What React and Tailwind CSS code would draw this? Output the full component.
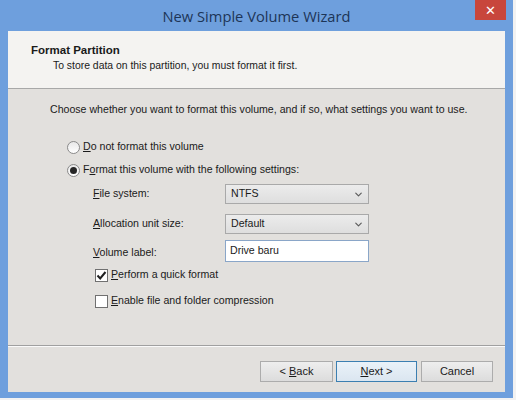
import { ChevronDown } from "lucide-react";

function Key({ children }) {
  return <span className="underline underline-offset-[1px]">{children}</span>;
}

function Radio({ checked, children }) {
  return (
    <div className="flex items-center h-[16px]">
      <div className="w-[13px] h-[13px] rounded-full border border-[#8a8a8a] bg-gradient-to-b from-[#e8e8e8] to-[#ffffff] flex items-center justify-center">
        {checked && <div className="w-[7px] h-[7px] rounded-full bg-[#262626]" />}
      </div>
      <span className="ml-[3px]">{children}</span>
    </div>
  );
}

function Checkbox({ checked, children }) {
  return (
    <div className="flex items-center h-[14px]">
      <div className="w-[13px] h-[13px] border border-[#707070] bg-white flex items-center justify-center">
        {checked && (
          <svg width="11" height="11" viewBox="0 0 11 11">
            <path d="M1.5 5.5 L4.2 8.5 L9.5 2" fill="none" stroke="#202020" strokeWidth="2" />
          </svg>
        )}
      </div>
      <span className="ml-[3px]">{children}</span>
    </div>
  );
}

function Select({ value }) {
  return (
    <div className="w-[144px] h-[20px] border border-[#a9a9a9] bg-gradient-to-b from-[#ececec] to-[#dedede] flex items-center justify-between pl-[5px] pr-[4px]">
      <span>{value}</span>
      <ChevronDown size={11} strokeWidth={2.5} className="text-[#5a5a5a]" />
    </div>
  );
}

function Button({ children, primary, className = "" }) {
  return (
    <div
      className={
        "h-[21px] flex items-center justify-center border bg-gradient-to-b text-[11px] " +
        (primary
          ? "border-[#3c7fb1] from-[#eaf2f9] to-[#dbe6f0] "
          : "border-[#acacac] from-[#eeeeee] to-[#dcdcdc] ") +
        className
      }
    >
      <span className="whitespace-pre">{children}</span>
    </div>
  );
}

export default function App() {
  return (
    <div
      className="w-[516px] h-[400px] bg-[#f2f2f2] text-[10.6px] text-[#1a1a1a]"
      style={{ fontFamily: '"Liberation Sans", Arial, sans-serif' }}
    >
      <div className="w-[513px] h-[398px] bg-[#6e9fdd] flex flex-col">
        <div className="h-[31px] grid grid-cols-[1fr_auto_1fr]">
          <div />
          <div
            className="pt-[5px] text-[14.7px] text-[#1d3557]"
            style={{ fontFamily: '"Open Sans", sans-serif' }}
          >
            New Simple Volume Wizard
          </div>
          <div className="flex justify-end pr-[7px]">
            <div className="w-[31px] h-[20px] bg-[#c8463c] flex items-center justify-center text-white text-[13px] leading-none">
              ✕
            </div>
          </div>
        </div>

        <div className="mx-[8px] flex-1 flex flex-col bg-[#e2e0dd] mb-[6px]">
          <div className="h-[58px] bg-[#f4f3f1] border-b border-[#a8a8a8] pl-[23px] pt-[12px]">
            <div className="font-bold text-[11.5px] leading-[14px]">Format Partition</div>
            <div className="pl-[22px] mt-[2px] leading-[13px] text-[10.4px]">
              To store data on this partition, you must format it first.
            </div>
          </div>

          <div className="flex-1 flex flex-col pl-[42px] pt-[14px] border-b border-[#a0a0a0]">
            <div className="leading-[13px]">
              Choose whether you want to format this volume, and if so, what settings you want to use.
            </div>
            <div className="pl-[17px] mt-[23px] flex flex-col">
              <Radio>
                <Key>D</Key>o not format this volume
              </Radio>
              <div className="mt-[7px]">
                <Radio checked>
                  F<Key>o</Key>rmat this volume with the following settings:
                </Radio>
              </div>
              <div className="pl-[26px] mt-[6px] flex flex-col">
                <div className="flex items-center">
                  <span className="w-[132px]">
                    <Key>F</Key>ile system:
                  </span>
                  <Select value="NTFS" />
                </div>
                <div className="flex items-center mt-[10px]">
                  <span className="w-[132px]">
                    <Key>A</Key>llocation unit size:
                  </span>
                  <Select value="Default" />
                </div>
                <div className="flex items-center mt-[6px]">
                  <span className="w-[132px] pt-[3px]">
                    <Key>V</Key>olume label:
                  </span>
                  <div className="w-[144px] h-[22px] border border-[#8aa6c8] bg-white pl-[4px] pt-[2px]">
                    Drive baru
                  </div>
                </div>
                <div className="mt-[6px] pl-[2px]">
                  <Checkbox checked>
                    <Key>P</Key>erform a quick format
                  </Checkbox>
                </div>
                <div className="mt-[12px] pl-[2px]">
                  <Checkbox>
                    <Key>E</Key>nable file and folder compression
                  </Checkbox>
                </div>
              </div>
            </div>
          </div>

          <div className="h-[46px] border-t border-[#fafafa] flex justify-end items-start pt-[14px] pr-[12px]">
            <Button className="w-[73px]">
              {"< "}
              <Key>B</Key>ack
            </Button>
            <Button primary className="w-[81px] ml-[3px]">
              <Key>N</Key>
              {"ext >"}
            </Button>
            <Button className="w-[72px] ml-[4px]">Cancel</Button>
          </div>
        </div>
      </div>
    </div>
  );
}
